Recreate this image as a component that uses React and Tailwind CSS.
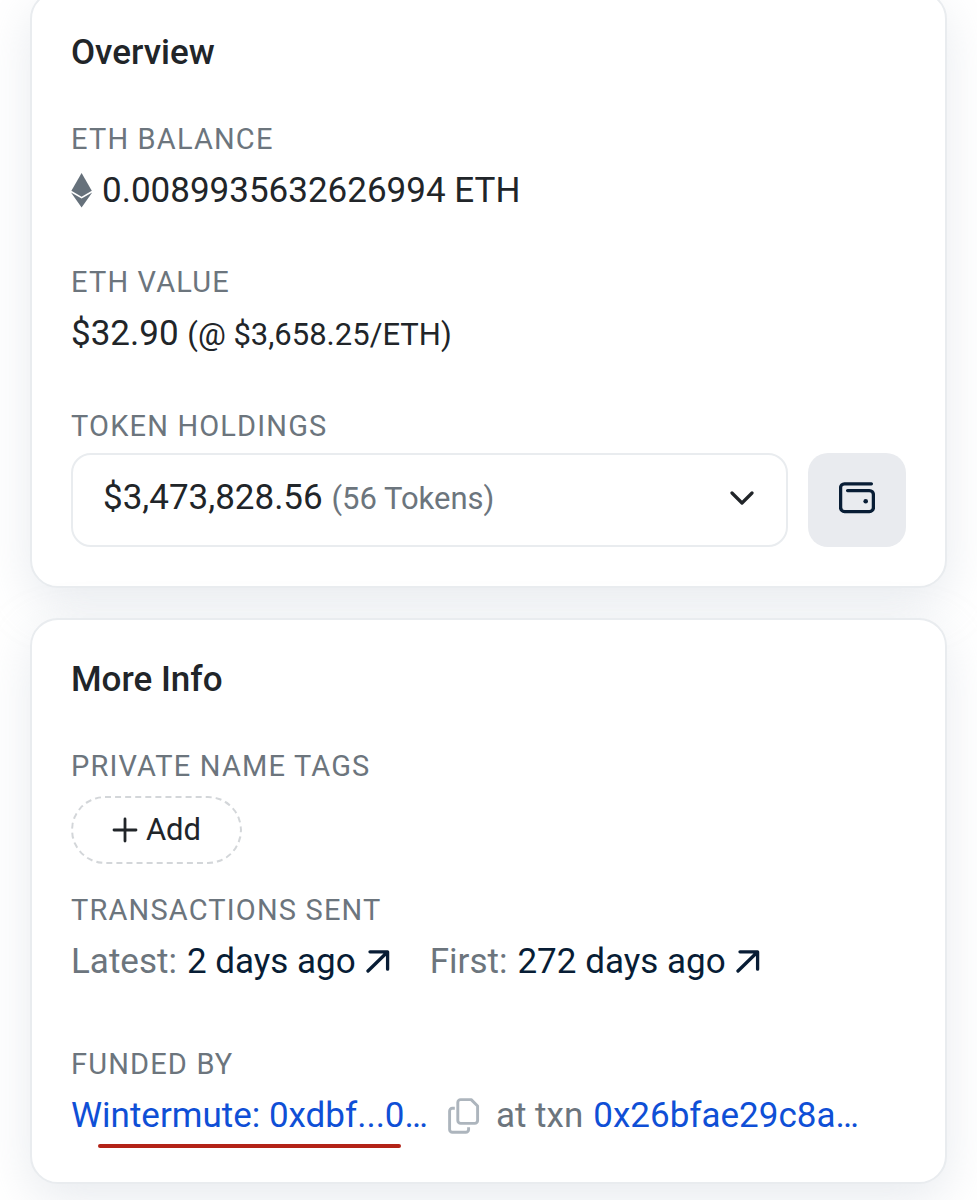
import { useState } from "react";

function Card({ title, children }) {
  return (
    <section className="bg-white border-2 border-[#e9ecef] rounded-[28px] px-[39px] pb-9 pt-[34px] shadow-[0_16px_48px_rgba(189,197,209,0.35)]">
      <h2 className="text-[35px] leading-[52px] font-medium">{title}</h2>
      {children}
    </section>
  );
}

function Label({ htmlFor, children }) {
  const Tag = htmlFor ? "label" : "h3";

  return (
    <Tag
      htmlFor={htmlFor}
      className="block text-[29px] leading-[44px] tracking-[0.04em] uppercase text-[#6c757d]"
    >
      {children}
    </Tag>
  );
}

function EthIcon() {
  return (
    <svg width="22" height="36" viewBox="0 0 22 36" fill="#66717b" aria-hidden="true">
      <path d="M10.6 0 20.8 17.8 10.6 23.8 .4 17.8z" />
      <path d="M0 19.4 10.6 25.6 21.2 19.4 10.6 34.4z" />
    </svg>
  );
}

function WalletIcon() {
  return (
    <svg
      width="36"
      height="32"
      viewBox="0 0 36 32"
      fill="none"
      stroke="#081d35"
      strokeWidth="3.3"
      strokeLinecap="round"
      strokeLinejoin="round"
      aria-hidden="true"
    >
      <path d="M32.4 1.8H5.4a3.8 3.8 0 0 0-3.8 3.8v20a4 4 0 0 0 4 4h24.8a4 4 0 0 0 4-4V12.6a4 4 0 0 0-4-4H8.6" />
      <circle cx="26.7" cy="19.2" r="2.3" fill="#081d35" stroke="none" />
    </svg>
  );
}

function ArrowIcon() {
  return (
    <svg
      width="24"
      height="24"
      viewBox="0 0 24 24"
      fill="none"
      stroke="currentColor"
      strokeWidth="3.3"
      strokeLinecap="round"
      strokeLinejoin="round"
      aria-hidden="true"
    >
      <path d="M4 1.8h17.6v17.4M21.2 2.2 2 21" />
    </svg>
  );
}

function CopyIcon() {
  return (
    <svg
      width="32"
      height="36"
      viewBox="0 0 32 36"
      fill="none"
      stroke="#adb5bd"
      strokeWidth="2.9"
      strokeLinejoin="round"
      aria-hidden="true"
    >
      <path d="M12.6 1.6h10.6l6.4 6.4v14.6a2.8 2.8 0 0 1-2.8 2.8H12.6a2.8 2.8 0 0 1-2.8-2.8V4.4a2.8 2.8 0 0 1 2.8-2.8z" />
      <path d="M6.8 10.2H4.4a2.8 2.8 0 0 0-2.8 2.8v18.4a2.8 2.8 0 0 0 2.8 2.8h13.4a2.8 2.8 0 0 0 2.8-2.8v-2.2" />
    </svg>
  );
}

function App() {
  const [holding, setHolding] = useState("all");

  return (
    <main className="-mt-[9px] px-[30px] pb-[19px] flex flex-col gap-[30px] overflow-hidden bg-white text-[#212529] font-['Roboto',sans-serif] text-[35px] leading-[60px]">
      <Card title="Overview">
        <div className="mt-[38px] mb-[3px] flex flex-col gap-[39px]">
          {/* Balance */}
          <div>
            <Label>Eth Balance</Label>
            <p className="flex items-center gap-[9px] whitespace-nowrap">
              <EthIcon />
              0.0089935632626994 ETH
            </p>
          </div>

          {/* Value */}
          <div>
            <Label>Eth Value</Label>
            <p className="whitespace-nowrap">
              $32.90 <span className="text-[31px]">(@ $3,658.25/ETH)</span>
            </p>
          </div>

          {/* Tokens */}
          <div>
            <Label htmlFor="holdings">Token Holdings</Label>
            <div className="mt-[5px] flex gap-5">
              <div className="relative flex-1 h-[94px] pb-1 flex items-center justify-between border-2 border-[#e9ecef] rounded-[20px] pl-[30px] pr-8">
                <span className="whitespace-nowrap">
                  $3,473,828.56{" "}
                  <span className="text-[31px] text-[#6c757d]">(56 Tokens)</span>
                </span>
                <svg
                  width="24"
                  height="14"
                  viewBox="0 0 24 14"
                  fill="none"
                  stroke="#212529"
                  strokeWidth="3.2"
                  strokeLinecap="round"
                  strokeLinejoin="round"
                  aria-hidden="true"
                >
                  <path d="M2 2l10 10L22 2" />
                </svg>
                <select
                  id="holdings"
                  value={holding}
                  onChange={(e) => setHolding(e.target.value)}
                  className="absolute inset-0 w-full h-full opacity-0 cursor-pointer"
                >
                  <option value="all">$3,473,828.56 (56 Tokens)</option>
                </select>
              </div>
              <button
                type="button"
                aria-label="Open wallet"
                className="w-[98px] h-[94px] pb-1 flex items-center justify-center rounded-[20px] bg-[#e9ebef]"
              >
                <WalletIcon />
              </button>
            </div>
          </div>
        </div>
      </Card>

      <Card title="More Info">
        <div className="mt-[38px]">
          {/* Name tags */}
          <Label>Private Name Tags</Label>
          <button
            type="button"
            className="mt-2 h-[68px] w-[171px] flex items-center justify-center gap-2 rounded-full border-2 border-dashed border-[#d3d6d9] text-[31px]"
          >
            <svg
              width="26"
              height="26"
              viewBox="0 0 26 26"
              stroke="currentColor"
              strokeWidth="2.8"
              strokeLinecap="round"
              aria-hidden="true"
            >
              <path d="M13 2v22M2 13h22" />
            </svg>
            Add
          </button>

          {/* Transactions */}
          <div className="mt-6">
            <Label>Transactions Sent</Label>
            <div className="flex gap-10 whitespace-nowrap text-[#6c757d]">
              <p className="flex items-center gap-[10px]">
                Latest:
                <a href="#latest" className="flex items-center gap-[10px] text-[#081d35]">
                  2 days ago <ArrowIcon />
                </a>
              </p>
              <p className="flex items-center gap-[10px]">
                First:
                <a href="#first" className="flex items-center gap-[10px] text-[#081d35]">
                  272 days ago <ArrowIcon />
                </a>
              </p>
            </div>
          </div>

          {/* Funding */}
          <div className="mt-[50px]">
            <Label>Funded By</Label>
            <div className="flex items-center whitespace-nowrap text-[#6c757d]">
              <a href="#wintermute" className="relative text-[#0f4fd6]">
                Wintermute: 0xdbf...0…
                <span className="absolute left-[27px] right-[27px] -bottom-0.5 h-1 rounded-full bg-[#b32317]" />
              </a>
              <button type="button" aria-label="Copy address" className="ml-5 mr-4">
                <CopyIcon />
              </button>
              <span className="mr-[10px]">at txn</span>
              <a href="#txn" className="text-[#0f4fd6]">
                0x26bfae29c8a…
              </a>
            </div>
          </div>
        </div>
      </Card>
    </main>
  );
}

export default App;
